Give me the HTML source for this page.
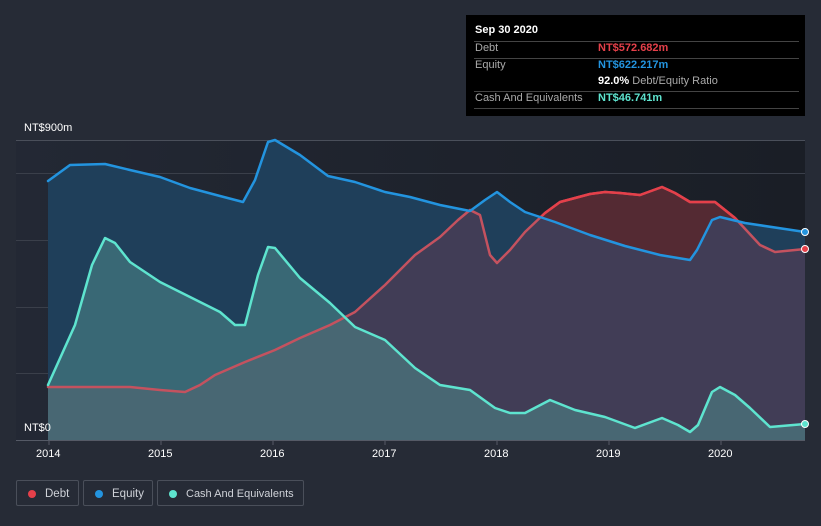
<!DOCTYPE html>
<html><head><meta charset="utf-8"><style>
html,body{margin:0;width:821px;height:526px;overflow:hidden}
body{background:#262b36;font-family:"Liberation Sans",sans-serif;position:relative}
.t{position:absolute;color:#fff;font-size:11px;white-space:nowrap}
.tip{position:absolute;left:466px;top:15px;width:339px;height:101px;background:#000;color:#fff;font-size:11px;white-space:nowrap}
.tip .r{position:absolute;left:8px;right:6px;border-top:1px solid #444}
.lg{position:absolute;top:480px;height:26px;border:1px solid #4a4f5a;border-radius:2px;color:#cfd2d8;font-size:11.5px;line-height:26px;box-sizing:border-box;white-space:nowrap}
.lg i{position:absolute;left:11px;top:9px;width:8px;height:8px;border-radius:50%}
</style></head><body>
<svg width="821" height="526" style="position:absolute;left:0;top:0">
<defs>
<linearGradient id="bg" x1="0" x2="1"><stop offset="0" stop-color="#232834"/><stop offset="1" stop-color="#1a1e26"/></linearGradient>
<clipPath id="above"><polygon points="48,0 805,0 805,232 745,223 720,217 712,220 697,250 690,260 660,255 625,246 590,235 555,222 525,212 510,202 497,192 485,200 470,211 440,205 410,197 385,192 355,182 328,176 300,155 275,140 268,142 255,180 243,202 220,196 190,188 160,177 130,170 105,164 70,165 48,181"/></clipPath>
</defs>
<rect x="16" y="140" width="789" height="300" fill="url(#bg)"/>
<g stroke="#3a3f4a" stroke-width="1"><line x1="16" y1="140.5" x2="805" y2="140.5" stroke="#4a4f5a"/><line x1="16" y1="173.5" x2="805" y2="173.5"/><line x1="16" y1="240.5" x2="805" y2="240.5"/><line x1="16" y1="307.5" x2="805" y2="307.5"/><line x1="16" y1="373.5" x2="805" y2="373.5"/></g>
<polygon fill="#1f3f5a" points="48,440 48,181 70,165 105,164 130,170 160,177 190,188 220,196 243,202 255,180 268,142 275,140 300,155 328,176 355,182 385,192 410,197 440,205 470,211 485,200 497,192 510,202 525,212 555,222 590,235 625,246 660,255 690,260 697,250 712,220 720,217 745,223 805,232 805,440"/>
<polygon fill="#433d56" opacity="0.95" points="48,440 48,387 130,387 160,390 185,392 200,385 215,375 245,362 275,350 300,338 330,325 355,312 385,285 415,255 440,237 458,220 470,210 480,215 490,255 497,263 510,250 525,232 545,213 560,202 590,194 605,192 620,193 640,195 662,187 675,193 690,202 715,202 735,218 760,245 775,252 805,249 805,440"/>
<polygon fill="#542a33" clip-path="url(#above)" points="48,440 48,387 130,387 160,390 185,392 200,385 215,375 245,362 275,350 300,338 330,325 355,312 385,285 415,255 440,237 458,220 470,210 480,215 490,255 497,263 510,250 525,232 545,213 560,202 590,194 605,192 620,193 640,195 662,187 675,193 690,202 715,202 735,218 760,245 775,252 805,249 805,440"/>
<polygon fill="#4f8a8c" opacity="0.55" points="48,440 48,385 75,325 92,265 105,238 115,243 130,262 160,282 190,297 220,312 235,325 245,325 258,275 268,247 275,248 300,278 330,303 355,327 385,340 415,368 440,385 470,390 495,408 510,413 525,413 550,400 575,410 605,417 635,428 662,418 678,425 690,432 698,425 712,392 720,387 735,395 750,408 770,427 805,424 805,440"/>
<g fill="none" stroke-width="2.5" stroke-linejoin="round" stroke-linecap="round">
<polyline stroke="#c4525f" points="48,387 130,387 160,390 185,392 200,385 215,375 245,362 275,350 300,338 330,325 355,312 385,285 415,255 440,237 458,220 470,210 480,215 490,255 497,263 510,250 525,232 545,213 560,202 590,194 605,192 620,193 640,195 662,187 675,193 690,202 715,202 735,218 760,245 775,252 805,249"/>
<polyline stroke="#e5404a" clip-path="url(#above)" points="48,387 130,387 160,390 185,392 200,385 215,375 245,362 275,350 300,338 330,325 355,312 385,285 415,255 440,237 458,220 470,210 480,215 490,255 497,263 510,250 525,232 545,213 560,202 590,194 605,192 620,193 640,195 662,187 675,193 690,202 715,202 735,218 760,245 775,252 805,249"/>
<polyline stroke="#2394df" points="48,181 70,165 105,164 130,170 160,177 190,188 220,196 243,202 255,180 268,142 275,140 300,155 328,176 355,182 385,192 410,197 440,205 470,211 485,200 497,192 510,202 525,212 555,222 590,235 625,246 660,255 690,260 697,250 712,220 720,217 745,223 805,232"/>
<polyline stroke="#5ee4cf" points="48,385 75,325 92,265 105,238 115,243 130,262 160,282 190,297 220,312 235,325 245,325 258,275 268,247 275,248 300,278 330,303 355,327 385,340 415,368 440,385 470,390 495,408 510,413 525,413 550,400 575,410 605,417 635,428 662,418 678,425 690,432 698,425 712,392 720,387 735,395 750,408 770,427 805,424"/>
</g>
<line x1="16" y1="440.5" x2="805" y2="440.5" stroke="#555a66"/>
<g stroke="#555a66"><line x1="49" y1="440" x2="49" y2="445"/><line x1="161" y1="440" x2="161" y2="445"/><line x1="273" y1="440" x2="273" y2="445"/><line x1="385" y1="440" x2="385" y2="445"/><line x1="497" y1="440" x2="497" y2="445"/><line x1="609" y1="440" x2="609" y2="445"/><line x1="721" y1="440" x2="721" y2="445"/></g>
<circle cx="805" cy="232" r="3.5" fill="#2394df" stroke="#fff"/>
<circle cx="805" cy="249" r="3.5" fill="#e5404a" stroke="#fff"/>
<circle cx="805" cy="424" r="3.5" fill="#5ee4cf" stroke="#fff"/>
</svg>
<div class="t" style="left:24px;top:122px">NT$900m</div>
<div class="t" style="left:24px;top:422px">NT$0</div>
<div class="t" style="left:36px;top:448px">2014</div>
<div class="t" style="left:148px;top:448px">2015</div>
<div class="t" style="left:260px;top:448px">2016</div>
<div class="t" style="left:372px;top:448px">2017</div>
<div class="t" style="left:484px;top:448px">2018</div>
<div class="t" style="left:596px;top:448px">2019</div>
<div class="t" style="left:708px;top:448px">2020</div>
<div class="tip">
<div style="position:absolute;left:9px;top:9px;font-weight:bold">Sep 30 2020</div>
<div class="r" style="top:26px"></div>
<div style="position:absolute;left:9px;top:27px;color:#aaa">Debt</div><div style="position:absolute;left:132px;top:27px;color:#e5404a;font-weight:bold">NT$572.682m</div>
<div class="r" style="top:43px"></div>
<div style="position:absolute;left:9px;top:44px;color:#aaa">Equity</div><div style="position:absolute;left:132px;top:44px;color:#2394df;font-weight:bold">NT$622.217m</div>
<div style="position:absolute;left:132px;top:60px"><b>92.0%</b> <span style="color:#aaa">Debt/Equity Ratio</span></div>
<div class="r" style="top:76px"></div>
<div style="position:absolute;left:9px;top:77px;color:#aaa">Cash And Equivalents</div><div style="position:absolute;left:132px;top:77px;color:#5ee4cf;font-weight:bold">NT$46.741m</div>
<div class="r" style="top:93px"></div>
</div>
<div class="lg" style="left:16px;width:63px"><i style="background:#e5404a"></i><span style="position:absolute;left:28px">Debt</span></div>
<div class="lg" style="left:83px;width:70px"><i style="background:#2394df"></i><span style="position:absolute;left:28px">Equity</span></div>
<div class="lg" style="left:157px;width:147px"><i style="background:#5ee4cf"></i><span style="position:absolute;left:28px;font-size:11px">Cash And Equivalents</span></div>
</body></html>
